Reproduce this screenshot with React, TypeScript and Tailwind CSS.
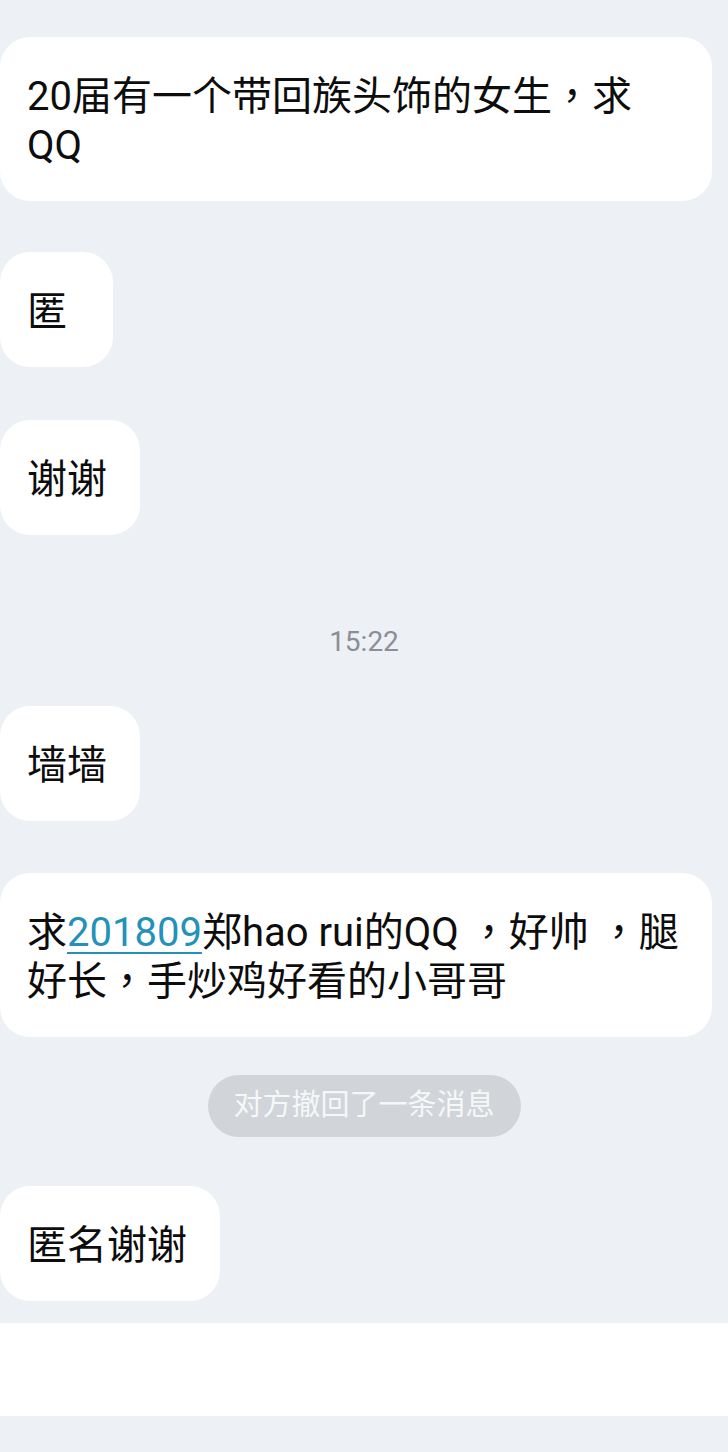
import React from "react";

const font = { fontFamily: 'Roboto, "Noto Sans CJK SC", sans-serif' };

function C() {
  return <span className="leading-[0px]" style={{ fontFamily: '"Noto Sans CJK TC", sans-serif' }}>，</span>;
}

function Bubble({ children, className = "" }: { children: React.ReactNode; className?: string }) {
  return (
    <div
      className={`self-start bg-white rounded-[30px] pl-[27px] pr-[33px] pt-[35px] pb-[31px] text-[40px] leading-[49px] text-[#0d0d0d] ${className}`}
    >
      {children}
    </div>
  );
}

export default function App() {
  return (
    <div className="w-[728px] h-[1452px] bg-[#edf0f4] flex flex-col overflow-hidden" style={font}>
      <Bubble className="mt-[37px] w-[712px]">
        20届有一个带回族头饰的女生<C />求
        <br />
        QQ
      </Bubble>
      <Bubble className="mt-[51px] min-w-[113px]">匿</Bubble>
      <Bubble className="mt-[53px]">谢谢</Bubble>
      <div className="mt-[92px] h-[30px] flex items-center justify-center text-[28px] text-[#8b8e94]">15:22</div>
      <Bubble className="mt-[49px]">墙墙</Bubble>
      <Bubble className="mt-[52px] w-[712px] whitespace-nowrap">
        求<span className="text-[#2391b8] underline underline-offset-[6px] decoration-[2px]">201809</span>郑hao rui的QQ <C />好帅 <C />腿
        <br />
        好长<C />手炒鸡好看的小哥哥
      </Bubble>
      <div className="mt-[38px] self-center h-[62px] w-[313px] rounded-full bg-[#d1d5d9] flex items-center justify-center text-[29px] text-[#f6f7f8]">
        对方撤回了一条消息
      </div>
      <Bubble className="mt-[49px]">匿名谢谢</Bubble>
      <div className="mt-[22px] h-[93px] bg-white w-full" />
    </div>
  );
}
